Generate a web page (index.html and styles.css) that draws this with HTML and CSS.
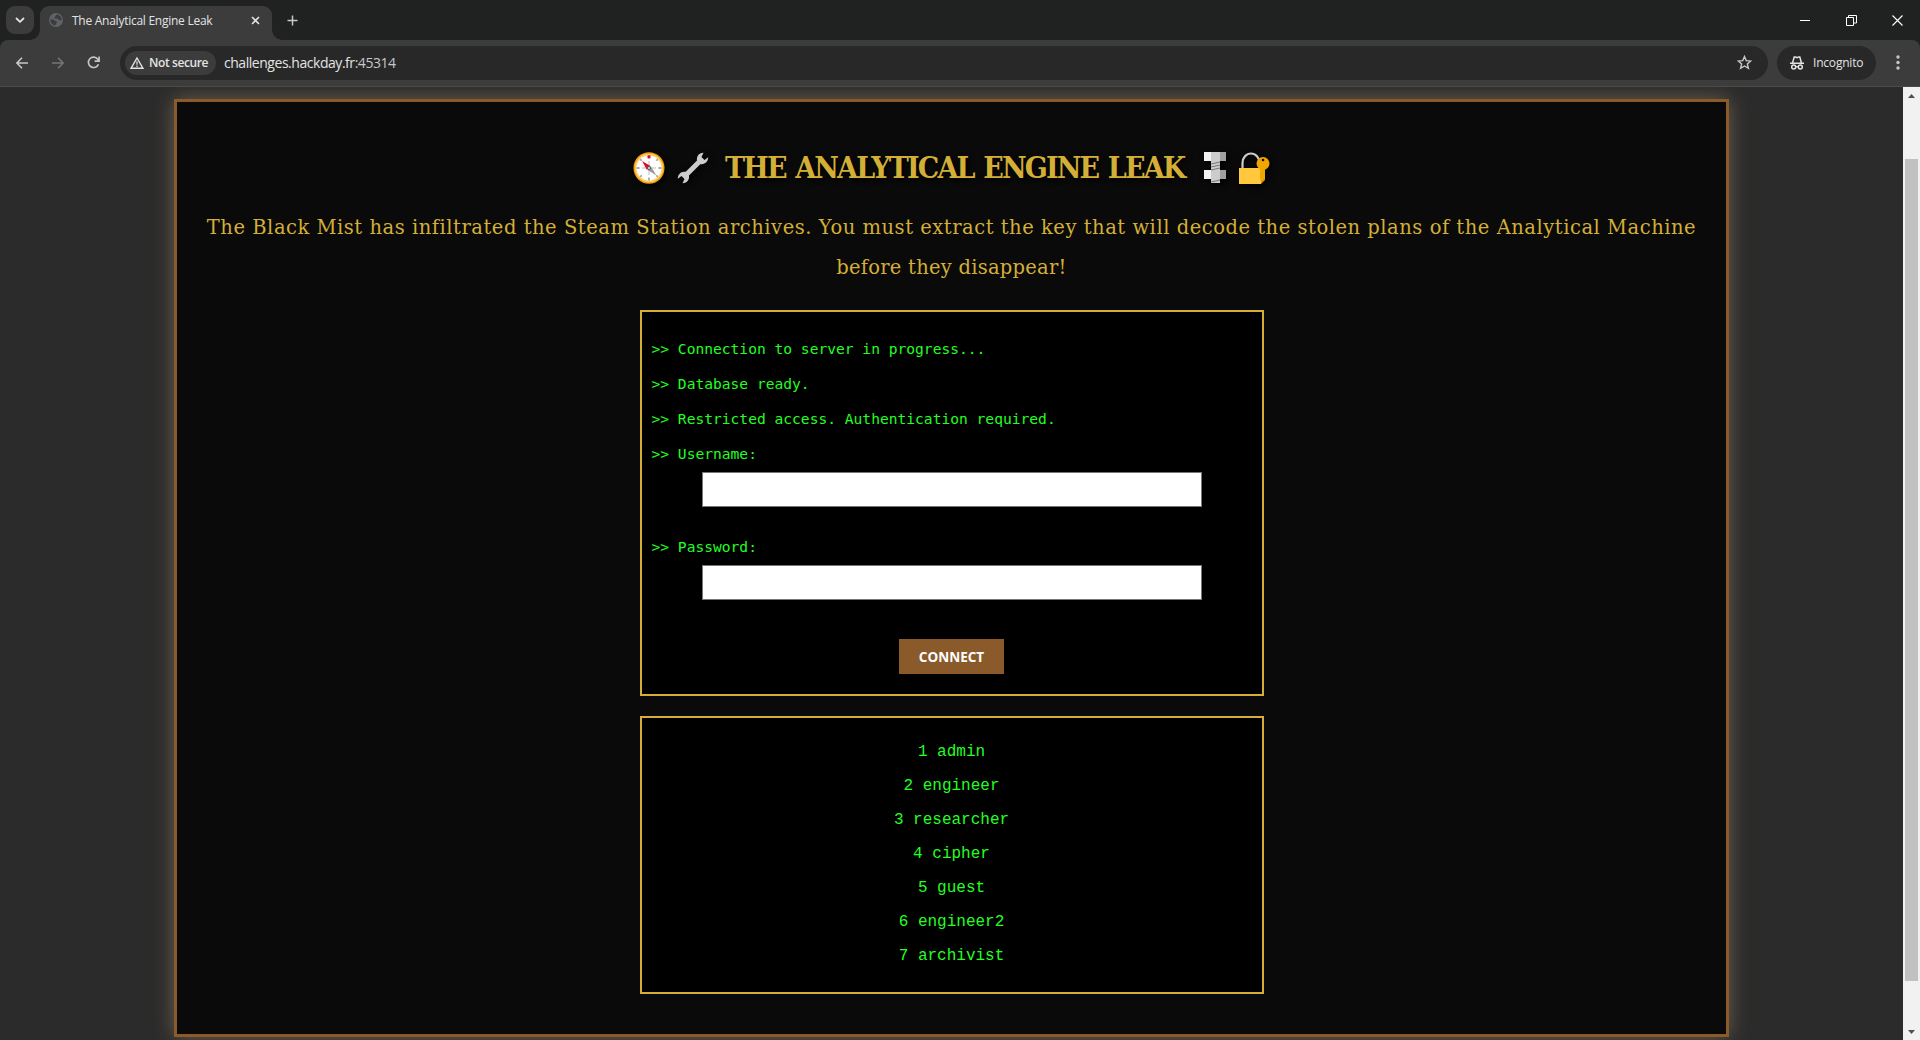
FILE: index.html
```html
<!DOCTYPE html>
<html lang="en">
<head>
<meta charset="utf-8">
<title>The Analytical Engine Leak</title>
<link rel="stylesheet" href="styles.css">
</head>
<body>
<header class="tabstrip">
  <button class="tab-search" aria-label="Search tabs"><svg width="10" height="6" viewBox="0 0 10 6"><path d="M1 1l4 3.8L9 1" fill="none" stroke="#e3e3e3" stroke-width="1.8"/></svg></button>
  <div class="tab">
    <svg class="favicon" width="14" height="14" viewBox="0 0 14 14"><circle cx="7" cy="7" r="7" fill="#5f6368"/><path d="M7.5 1.5c-1 .8-.3 1.500-1.500 2.300-.9.6-1 1.500-.2 1.700h2.500c1.300 0 1 1.700 2.200 1.700h2.200a5.600 5.600 0 0 0-5.200-5.700zM1.400 6.500a5.600 5.600 0 0 0 4.800 6c.8-.8 0-1.700 1.200-2.300 1-.6.8-1.900-.5-2.100-1.500-.2-1.700-1.600-3-1.600z" fill="#3c3c3c"/></svg>
    <span class="tab-title">The Analytical Engine Leak</span>
    <svg class="tab-close" width="9" height="9" viewBox="0 0 9 9"><path d="M1 1l7 7M8 1L1 8" stroke="#e3e3e3" stroke-width="1.600"/></svg>
  </div>
  <svg class="new-tab" width="11" height="11" viewBox="0 0 11 11"><path d="M5.500 .5v10M.5 5.500h10" stroke="#c7c7c7" stroke-width="1.500"/></svg>
  <div class="window-controls">
    <svg width="11" height="11" viewBox="0 0 11 11"><path d="M0 5.500h10" stroke="#fff"/></svg>
    <svg width="11" height="11" viewBox="0 0 11 11"><path d="M.5 2.500h7v8h-7zM2.500 2.500v-2h8v7.500h-3" fill="none" stroke="#fff"/></svg>
    <svg width="11" height="11" viewBox="0 0 11 11"><path d="M.5 .5l10 10M10.500 .5l-10 10" stroke="#fff" stroke-width="1.100"/></svg>
  </div>
</header>
<nav class="toolbar">
  <div class="nav-buttons">
    <svg width="12" height="12" viewBox="0 0 12 12"><path d="M12 6H1M6 .8L.9 6 6 11.200" fill="none" stroke="#c7c7c7" stroke-width="1.600"/></svg>
    <svg width="12" height="12" viewBox="0 0 12 12"><path d="M0 6h11M6 .8L11.100 6 6 11.200" fill="none" stroke="#757575" stroke-width="1.600"/></svg>
    <svg width="13" height="13" viewBox="0 0 13 13"><path d="M11.500 8.200A5.200 5.200 0 1 1 10.800 3.200L12 4.800M12.100 .5v4.600H7.600" fill="none" stroke="#c7c7c7" stroke-width="1.600"/></svg>
  </div>
  <div class="address">
    <div class="security">
      <svg width="14" height="12" viewBox="0 0 14 12"><path d="M7 1L13 11.300H1z" fill="none" stroke="#e3e3e3" stroke-width="1.400"/><path d="M7 4.300v3.500M7 8.600v1.300" stroke="#e3e3e3" stroke-width="1.200"/></svg>
      <span class="security-label">Not secure</span>
    </div>
    <span class="url">challenges.hackday.fr<span class="port">:45314</span></span>
    <svg class="star" width="15" height="15" viewBox="0 0 15 15"><path d="M7.500 1.500l1.750 4.100 4.500.4-3.400 2.950 1.050 4.400-3.900-2.350-3.900 2.350 1.050-4.400L1.250 6l4.500-.4z" fill="none" stroke="#c7c7c7" stroke-width="1.400"/></svg>
  </div>
  <div class="incognito">
    <svg width="14" height="14" viewBox="0 0 14 14"><path d="M0 7.200h14M2.600 6.800L4.200 1h1.300l1.500.6L8.500 1h1.300l1.600 5.800" fill="none" stroke="#e3e3e3" stroke-width="1.500"/><circle cx="3.700" cy="11" r="2" fill="none" stroke="#e3e3e3" stroke-width="1.500"/><circle cx="10.300" cy="11" r="2" fill="none" stroke="#e3e3e3" stroke-width="1.500"/><path d="M5.700 10.700h2.600" stroke="#e3e3e3" stroke-width="1.300"/></svg>
    <span class="incognito-label">Incognito</span>
  </div>
  <svg class="menu" width="4" height="15" viewBox="0 0 4 15"><g fill="#c7c7c7"><circle cx="2" cy="2" r="1.700"/><circle cx="2" cy="7.500" r="1.700"/><circle cx="2" cy="13" r="1.700"/></g></svg>
</nav>
<div class="viewport">
  <main class="page">
    <section class="container">
      <h1 class="heading">
        <svg width="32" height="32" viewBox="0 0 32 32"><ellipse cx="16" cy="16" rx="15.500" ry="15.800" fill="#f2a30f"/><ellipse cx="16" cy="16" rx="14" ry="14.300" fill="#ffd06a"/><circle cx="16" cy="16" r="12.500" fill="#fff"/><path d="M16 3.500v3M16 25.500v3M3.500 16h3M25.500 16h3M7.200 7.200l1.500 1.500M23.300 8.700l1.500-1.500M7.200 24.800l1.500-1.500M24.800 24.800l-1.500-1.500" stroke="#a5abb0" stroke-width="1.800"/><path d="M16 3.300v3" stroke="#dc0d28" stroke-width="3"/><path d="M16 9v14M9 16h14" stroke="#bbb"/><path d="M9 9l8.500 5-3.500 4z" fill="#dc0d28"/><path d="M23.500 23.500l-9.200-5.700 3.500-3.600z" fill="#999"/><circle cx="16" cy="16" r="1.500" fill="#eee" stroke="#555"/></svg>
        <svg class="wrench" width="32" height="32" viewBox="0 0 32 32"><path d="M23 9L9 23" stroke="#ccc" stroke-width="5"/><path d="M26.500 .8c-5 .2-7.500 4-6.300 8.500l2.600 2.600c4.500 1.200 8.300-1.800 8.400-6.600l-3.700 2.700-3-3zM5.500 31.200c5-.2 7.500-4 6.300-8.500l-2.600-2.600C4.700 18.900.9 21.900.8 26.700L4.500 24l3 3z" fill="#ccc"/></svg>
        <span class="heading-text">THE ANALYTICAL ENGINE LEAK</span>
        <svg width="24" height="32" viewBox="0 0 24 32"><path fill="#f2f2f2" d="M1 0h7v9H1zM1 18h7v9H1z"/><path fill="#ccc" d="M8 0h9v31H8zM8 18h9v9H8z"/><path fill="#a0a0a0" d="M17 0h6v9h-6zM17 18h6v9h-6z"/><path d="M8 12l9-2M8 15l9-2M8 18l9-2M8 30l9-2" stroke="#777"/></svg>
        <svg width="32" height="33" viewBox="0 0 32 33"><path d="M4.500 17V11a8.500 9.500 0 0 1 17 0" fill="none" stroke="#ccc" stroke-width="2.200"/><path fill="#d99500" d="M1 16h26v12l-4 4H1z"/><path fill="#ffc83d" d="M1 16h22v16H1z"/><path fill="#f0a500" d="M22 14h5v12l-3 3-2-2z"/><circle cx="25" cy="11.500" r="6.500" fill="#f0a500"/><circle cx="25" cy="8" r="1.300" fill="#111"/></svg>
      </h1>
      <p class="intro"><span class="line">The Black Mist has infiltrated the Steam Station archives. You must extract the key that will decode the stolen plans of the Analytical Machine</span> <span class="line last">before they disappear!</span></p>
      <form class="terminal">
        <p class="log">&gt;&gt; Connection to server in progress...</p>
        <p class="log">&gt;&gt; Database ready.</p>
        <p class="log">&gt;&gt; Restricted access. Authentication required.</p>
        <label class="log" for="user">&gt;&gt; Username:</label>
        <input class="field" id="user" type="text">
        <label class="log" for="pass">&gt;&gt; Password:</label>
        <input class="field" id="pass" type="password">
        <button class="connect" type="button">CONNECT</button>
      </form>
      <div class="results">
        <p class="row">1 admin</p>
        <p class="row">2 engineer</p>
        <p class="row">3 researcher</p>
        <p class="row">4 cipher</p>
        <p class="row">5 guest</p>
        <p class="row">6 engineer2</p>
        <p class="row">7 archivist</p>
      </div>
    </section>
  </main>
  <div class="scrollbar">
    <svg width="7" height="4" viewBox="0 0 7 4"><path d="M0 4L3.500 0 7 4z" fill="#505050"/></svg>
    <div class="thumb"></div>
    <svg class="down" width="7" height="4" viewBox="0 0 7 4"><path d="M0 0l3.500 4L7 0z" fill="#505050"/></svg>
  </div>
</div>
</body>
</html>
```

FILE: styles.css
```css
* { box-sizing: border-box; }
body { margin: 0; height: 1040px; overflow: hidden; display: flex; flex-direction: column; background: #202221; font-family: "Open Sans", "Noto Sans", sans-serif; color: #e3e3e3; }
svg { display: block; flex: none; }
p, h1 { margin: 0; }

.tabstrip { height: 40px; flex: none; display: flex; padding: 6px 22px 0 6px; }
.tab-search { width: 28px; height: 28px; border: 0; padding: 0; border-radius: 9px; background: #3c3c3c; display: flex; align-items: center; justify-content: center; }
.tab { position: relative; width: 232px; height: 34px; margin-left: 6px; padding: 0 12px 6px 9px; border-radius: 9px 9px 0 0; background: #3c3c3c; display: flex; align-items: center; }
.tab::before, .tab::after { content: ""; position: absolute; bottom: 0; width: 10px; height: 10px; }
.tab::before { left: -10px; background: radial-gradient(circle at 0 0, transparent 9.5px, #3c3c3c 10px); }
.tab::after { right: -10px; background: radial-gradient(circle at 100% 0, transparent 9.5px, #3c3c3c 10px); }
.tab-title { margin-left: 9px; font-size: 12px; letter-spacing: -0.26px; white-space: nowrap; }
.tab-close { margin-left: auto; }
.new-tab { margin: 9px 0 0 15px; }
.window-controls { margin: 9px -5px 0 auto; display: flex; gap: 35px; }

.toolbar { height: 47px; flex: none; padding: 6px 20px 7px 16px; border-bottom: 1px solid #4a4c4a; border-radius: 8px 8px 0 0; background: #3c3c3c; display: flex; align-items: center; }
.nav-buttons { width: 85px; display: flex; align-items: center; gap: 23.5px; }
.address { flex: 1; height: 34px; margin-left: 19px; padding: 0 16px 0 5px; border-radius: 17px; background: #282828; display: flex; align-items: center; }
.security { width: 91px; height: 24px; padding-left: 5px; border-radius: 12px; background: #3c3c3c; display: flex; align-items: center; gap: 5px; }
.security-label { font-size: 12px; font-weight: 600; letter-spacing: -0.4px; white-space: nowrap; }
.url { margin-left: 8px; font-size: 14px; letter-spacing: -0.46px; white-space: nowrap; }
.port { color: #c7c7c7; }
.star { margin-left: auto; }
.incognito { width: 99px; height: 34px; margin: 0 20px 0 9px; padding-left: 13px; border-radius: 17px; background: #282828; display: flex; align-items: center; gap: 9px; }
.incognito-label { font-size: 12px; letter-spacing: -0.2px; }

.viewport { flex: 1; min-height: 0; display: flex; }
.page { flex: 1; padding: 12px 174px 3px; background: #2b2b2b; overflow: hidden; }
.container { height: 938px; padding: 47px 27px 0; border: 3px solid #8b5a2b; background: #0a0a0a; box-shadow: 0 0 20px rgba(255, 215, 160, 0.3); display: flex; flex-direction: column; align-items: center; }

.heading { height: 38px; display: flex; align-items: center; color: #d4af37; font: bold 30px/38px "DejaVu Serif", serif; }
.heading svg { filter: drop-shadow(2px 2px 3px #000); }
.wrench { margin-left: 12px; }
.heading-text { width: 464px; margin: 0 14px 0 16px; font-stretch: condensed; letter-spacing: -1.85px; word-spacing: 2px; white-space: nowrap; text-shadow: 2px 2px 5px #000; }
.heading svg:last-child { margin-left: 11px; }
.intro { margin-top: 21px; display: flex; flex-direction: column; align-items: center; color: #d4af37; font: 19.5px/40px "DejaVu Serif", serif; white-space: nowrap; }
.line { letter-spacing: 0.53px; }
.last { letter-spacing: 0.25px; }

.terminal { width: 624px; height: 386px; margin-top: 22px; padding: 19px 10px 0; border: 2px solid #d4af37; background: #000; display: flex; flex-direction: column; color: #2f2; font: 14.6px/35px "DejaVu Sans Mono", monospace; }
.log { height: 35px; }
.field { width: 500px; height: 35px; margin: 1px auto 22px; padding: 4px; border: 1px solid #767676; background: #fff; }
.connect { width: 105px; height: 35px; margin: 17px auto 0; padding: 0; border: 0; background: #8b5a2b; color: #fff; font: bold 13.5px "Open Sans", sans-serif; }
.results { width: 624px; height: 278px; margin-top: 20px; padding: 17px 10px; border: 2px solid #d4af37; background: #000; color: #2f2; text-align: center; font: 16px/34px "Liberation Mono", monospace; }

.scrollbar { width: 17px; padding: 7px 2px 6px; background: #f1f1f1; display: flex; flex-direction: column; align-items: center; }
.thumb { width: 13px; height: 822px; margin-top: 61px; background: #c1c1c1; }
.down { margin-top: auto; }
```
